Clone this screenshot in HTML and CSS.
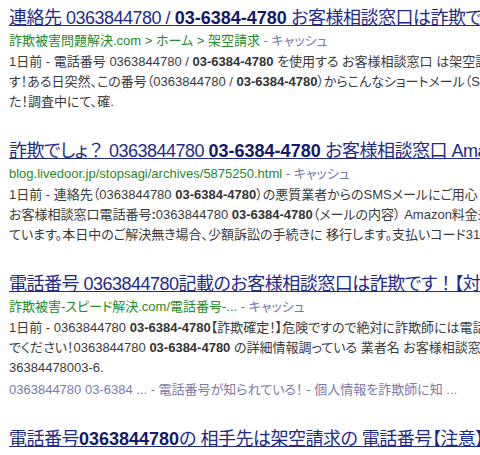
FILE: index.html
```html
<!DOCTYPE html>
<html lang="ja">
<head>
  <meta charset="UTF-8" />
  <title>0363844780 - 検索結果</title>
  <link rel="stylesheet" href="styles.css">
</head>
<body>
  <div class="results">
    <div class="result">
      <h3 class="title"><a href="#">連絡先 0363844780 / <b>03-6384-4780</b> お客様相談窓口は詐欺です！</a></h3>
      <div class="url">詐欺被害問題解決.com &gt; ホーム &gt; 架空請求 <span class="cache">- キャッシュ</span></div>
      <div class="snippet">
        <div class="line">1日前 - 電話番号 0363844780 / <b>03-6384-4780</b> を使用する お客様相談窓口 は架空請求業者で</div>
        <div class="line">す！ある日突然、この番号（0363844780 / <b>03-6384-4780</b>）からこんなショートメール（SMS）が届きまし</div>
        <div class="line">た！調査中にて、確.</div>
      </div>
    </div>

    <div class="result">
      <h3 class="title"><a href="#">詐欺でしょ<span class="wide">？</span> 0363844780 <b>03-6384-4780</b> お客様相談窓口 Amazon</a></h3>
      <div class="url">blog.livedoor.jp/stopsagi/archives/5875250.html <span class="cache">- キャッシュ</span></div>
      <div class="snippet">
        <div class="line">1日前 - 連絡先（0363844780 <b>03-6384-4780</b>）の悪質業者からのSMSメールにご用心！連絡</div>
        <div class="line">お客様相談窓口電話番号<b>:</b>0363844780 <b>03-6384-4780</b>（メールの内容） Amazon料金未納が発生し</div>
        <div class="line">ています。本日中のご解決無き場合、少額訴訟の手続きに 移行します。支払いコード3141</div>
      </div>
    </div>

    <div class="result">
      <h3 class="title"><a href="#">電話番号 0363844780記載のお客様相談窓口は詐欺です<span class="wide">！</span>【対策】</a></h3>
      <div class="url">詐欺被害-スピード解決.com/電話番号-... <span class="cache">- キャッシュ</span></div>
      <div class="snippet">
        <div class="line">1日前 - 0363844780 <b>03-6384-4780</b>【詐欺確定！】危険ですので絶対に詐欺師には電話しない</div>
        <div class="line">でください！0363844780 <b>03-6384-4780</b> の詳細情報調っている 業者名 お客様相談窓口 電話</div>
        <div class="line">36384478003-6.</div>
      </div>
      <div class="related">0363844780 03-6384 ... - 電話番号が知られている！ - 個人情報を詐欺師に知 ...</div>
    </div>

    <div class="result">
      <h3 class="title"><a href="#">電話番号<b>0363844780</b>の 相手先は架空請求の 電話番号【注意】</a></h3>
    </div>
  </div>
</body>
</html>
```

FILE: styles.css
```css
* { margin: 0; padding: 0; box-sizing: border-box; }
html, body { background: #fff; overflow: hidden; }
body {
  font-family: 'Liberation Sans', Arial, 'Noto Sans CJK JP', sans-serif;
  font-feature-settings: "palt";
  color: #3a3a3a;
  padding: 6px 0 0 9px;
  width: 480px;
}
.results { display: flex; flex-direction: column; gap: 27px; }
.result { white-space: nowrap; }
.title {
  font-size: 18px;
  font-weight: normal;
  line-height: 24px;
  letter-spacing: -0.5px;
  margin-bottom: 1px;
}
.title a { color: #1f2a8a; text-decoration: underline; }
.title b { color: #15196a; letter-spacing: 0; }
.wide { font-feature-settings: normal; }
.url {
  font-size: 13px;
  line-height: 20px;
  color: #268a26;
  margin-bottom: 1px;
}
.cache { color: #7878a8; }
.snippet { font-size: 13px; line-height: 20px; color: #3a3a3a; }
.snippet b { color: #333; }
.related { font-size: 13px; line-height: 20px; color: #7a7aae; margin-top: 2px; }
```
